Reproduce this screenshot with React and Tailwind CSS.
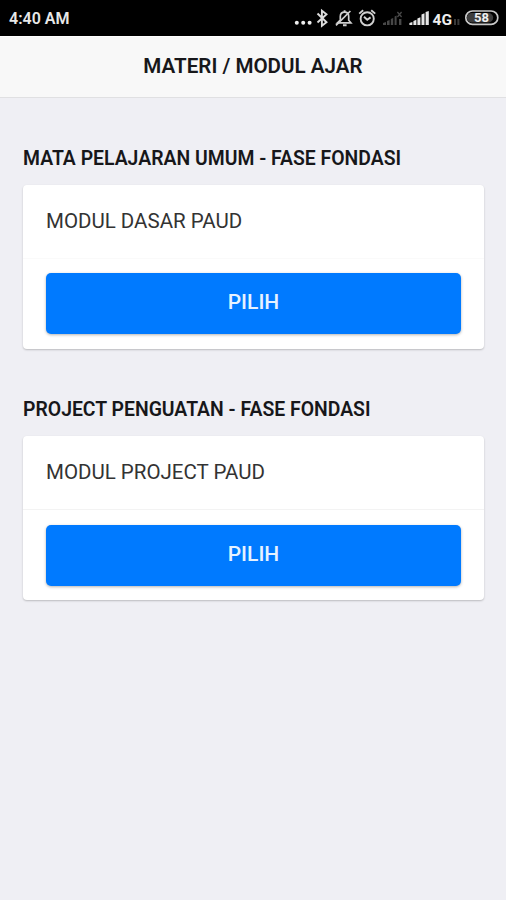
import { useState } from "react";

const MODULES = [
  {
    id: "umum",
    heading: "MATA PELAJARAN UMUM - FASE FONDASI",
    title: "MODUL DASAR PAUD",
    dividerClass: "border-[#fafafa]",
    actionClass: "pt-[14px]",
  },
  {
    id: "project",
    heading: "PROJECT PENGUATAN - FASE FONDASI",
    title: "MODUL PROJECT PAUD",
    dividerClass: "border-[#f3f3f3]",
    actionClass: "pt-[15px]",
  },
];

function StatusIcons() {
  return (
    <svg width="212" height="36" viewBox="0 0 212 36" fill="none" aria-hidden="true">
      {/* overflow dots */}
      <g fill="#eee">
        <circle cx="2.8" cy="22.8" r="2" />
        <circle cx="9.2" cy="22.8" r="2" />
        <circle cx="15.6" cy="22.8" r="2" />
      </g>

      {/* bluetooth */}
      <path d="M23.5 13.5l9 8.7-4.6 3.6V10.7l4.6 3.5-9 8.3" stroke="#ddd" strokeWidth="1.9" />

      {/* muted bell */}
      <g stroke="#d0d0d0" strokeWidth="1.7">
        <path d="M43.5 22.8h13.4l-2.2-2.6v-3.6c0-2.6-1.5-4.4-4.1-4.4s-4.3 1.8-4.3 4.4v3.6z" />
        <path d="M50.6 10.2v2M49 25.2h3.6" strokeWidth="1.9" />
        <path d="M42 25.4L56.4 11" />
      </g>

      {/* alarm */}
      <g stroke="#d0d0d0" strokeWidth="1.9">
        <circle cx="73.2" cy="18.8" r="6.6" />
        <path d="M65.2 13.6l4-3.4M81.2 13.6l-4-3.4" />
        <path d="M70 16.8l3.2 3 3.4-2.4" />
      </g>

      {/* first sim, no service */}
      <g fill="#484848">
        <path d="M89 25v-2l3-1v3zM93 25v-4l2.6-1v5zM96.8 25v-6l2.4-1v7zM100.6 25v-8.5l2-1V25zM105 25v-6h2.4v6z" />
      </g>
      <path d="M103.4 12l4.2 5M107.6 12l-4.2 5" stroke="#484848" strokeWidth="1.3" />

      {/* second sim */}
      <path
        d="M115.4 25v-2l3-1v3zM119.4 25v-4l3-1.2V25zM123.4 25v-6.5l3-1.2V25zM127.5 25V14.5l3-1.3V25zM131.6 25V12l3.2-1v14z"
        fill="#e6e6e6"
      />
      <path d="M160 19h2v6h-2zM163.4 19h2v6h-2z" fill="#3a3a3a" />

      {/* battery */}
      <rect x="171.8" y="11" width="32" height="13.4" rx="6.7" stroke="#c8c8c8" strokeWidth="1.7" />
      <path d="M177.5 13h17a4.7 4.7 0 0 1 0 9.4h-17a4.7 4.7 0 0 1 0-9.4z" fill="#3d3d3d" />
      <text
        x="187.5"
        y="22.4"
        fill="#f0f0f0"
        fontSize="13"
        fontWeight="700"
        fontFamily="Roboto, sans-serif"
        textAnchor="middle"
      >
        58
      </text>
      <text
        x="138.6"
        y="24.6"
        fill="#eee"
        fontSize="15.5"
        fontWeight="700"
        fontFamily="Roboto, sans-serif"
      >
        4G
      </text>
    </svg>
  );
}

function StatusBar() {
  return (
    <div className="flex h-9 shrink-0 items-center justify-between bg-black pl-[9px]">
      <span className="pt-px text-[16px] leading-none font-semibold text-[#e8e8e8]">4:40 AM</span>
      <StatusIcons />
    </div>
  );
}

function ModuleCard({ module, onSelect }) {
  return (
    <section className="h-[251px]">
      <h2 className="mb-[13px] h-[26px] text-[19.4px] leading-[26px] font-semibold whitespace-nowrap text-[#17171a]">
        {module.heading}
      </h2>
      <div className="h-[164px] rounded-[4px] bg-white shadow-[0_1px_2px_rgba(0,0,0,0.22)]">
        <div
          className={`flex h-[74px] items-center border-b px-[23px] text-[20.5px] text-[#333] ${module.dividerClass}`}
        >
          {module.title}
        </div>
        <div className={`px-[23px] ${module.actionClass}`}>
          <button
            type="button"
            onClick={() => onSelect(module.id)}
            className="h-[61px] w-full rounded-[5px] bg-[#007aff] pb-[2px] text-[21px] font-medium text-[#e6f2ff] shadow-[0_1px_3px_rgba(0,0,0,0.3)]"
          >
            PILIH
          </button>
        </div>
      </div>
    </section>
  );
}

export default function App() {
  const [, setSelected] = useState(null);

  return (
    <div className="flex h-[900px] w-[506px] flex-col overflow-hidden bg-[#efeff4] font-['Roboto',sans-serif]">
      <StatusBar />
      <header className="flex h-[62px] shrink-0 items-center justify-center border-t border-b border-t-white border-b-[#e0e0e2] bg-[#f8f8f8] pb-[3px]">
        <h1 className="text-[20.6px] leading-6 font-semibold text-[#17171a]">MATERI / MODUL AJAR</h1>
      </header>
      <main className="flex flex-col pt-12 pr-[22px] pl-[23px]">
        {MODULES.map((module) => (
          <ModuleCard key={module.id} module={module} onSelect={setSelected} />
        ))}
      </main>
    </div>
  );
}
